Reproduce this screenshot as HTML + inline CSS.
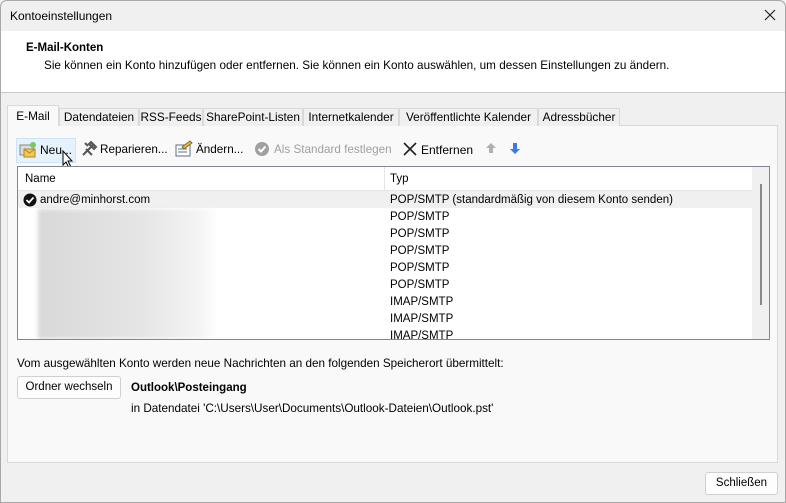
<!DOCTYPE html>
<html><head><meta charset="utf-8"><style>
*{margin:0;padding:0;box-sizing:border-box}
body{width:786px;height:503px;overflow:hidden;background:#f0f0f0;font-family:"Liberation Sans",sans-serif;font-size:12px;color:#000;position:relative}
.a{position:absolute;white-space:nowrap}
.tab{position:absolute;top:108px;height:18px;border:1px solid #d9d9d9;border-bottom:none;background:#f0f0f0;text-align:center;line-height:17px;font-size:11.8px;white-space:nowrap}
.l{font-size:11.5px}
</style></head><body>
<div class="a" style="left:0;top:0;width:786px;height:503px;border:1px solid #a8a8a8;border-radius:7px 7px 0 0"></div>
<div class="a" style="left:10px;top:9px;font-size:12px">Kontoeinstellungen</div>
<svg class="a" style="left:764px;top:9px" width="12" height="12"><path d="M1 1L11 11M11 1L1 11" stroke="#222" stroke-width="1.2"/></svg>
<div class="a" style="left:1px;top:31px;width:784px;height:62px;background:#fff;border-bottom:1px solid #c8c8c8"></div>
<div class="a" style="left:26px;top:42px;font-weight:bold;font-size:11.5px">E-Mail-Konten</div>
<div class="a" style="left:44px;top:59px;font-size:11.7px;letter-spacing:0.02px">Sie können ein Konto hinzufügen oder entfernen. Sie können ein Konto auswählen, um dessen Einstellungen zu ändern.</div>

<div class="a" style="left:7px;top:125px;width:771px;height:338px;border:1px solid #d9d9d9;background:#f9f9f9"></div>
<div class="tab" style="left:7px;top:105px;height:21px;width:52px;background:#f9f9f9;line-height:21px">E-Mail</div>
<div class="tab" style="left:59px;width:80px">Datendateien</div>
<div class="tab" style="left:139px;width:64px">RSS-Feeds</div>
<div class="tab" style="left:203px;width:100px">SharePoint-Listen</div>
<div class="tab" style="left:303px;width:96px">Internetkalender</div>
<div class="tab" style="left:399px;width:139px">Veröffentlichte Kalender</div>
<div class="tab" style="left:538px;width:82px">Adressbücher</div>

<div class="a" style="left:16px;top:138px;width:60px;height:25px;background:#e5f1fb;border:1px solid #cce4f7"></div>
<svg class="a" style="left:19px;top:141px" width="18" height="18"><rect x="1" y="4" width="13" height="10" fill="#ddd" stroke="#888"/><rect x="5" y="8" width="11" height="8" fill="#f2c94c" stroke="#a88a2a"/><path d="M5 8l5.5 4L16 8" fill="none" stroke="#a88a2a"/><circle cx="14" cy="4" r="3" fill="#7cc36b"/></svg>
<div class="a" style="left:40px;top:143px">Neu...</div>
<svg class="a" style="left:62px;top:150px" width="12" height="19"><path d="M1 1v14l3-3 3 6 2-1-3-6h4z" fill="#fff" stroke="#000"/></svg>
<svg class="a" style="left:80px;top:140px" width="18" height="18"><path d="M3 15L13 5M5 3l3 3M12 15L6 9M11 2l5 5-2 2-5-5z" stroke="#555" stroke-width="2" fill="#999"/></svg>
<div class="a" style="left:100px;top:143px;font-size:11.7px">Reparieren...</div>
<svg class="a" style="left:175px;top:140px" width="18" height="18"><rect x="1" y="5" width="14" height="11" fill="#fff" stroke="#5a6e8a"/><path d="M3 9h9M3 12h9" stroke="#5a6e8a"/><path d="M7 7l8-6 2 2-8 6z" fill="#e6b84a" stroke="#8a6a1a"/></svg>
<div class="a" style="left:196px;top:143px;font-size:11.7px">Ändern...</div>
<svg class="a" style="left:254px;top:141px" width="16" height="16"><circle cx="8" cy="8" r="7" fill="#a0a0a0"/><path d="M4.5 8l2.5 2.5 4.5-5" stroke="#fff" stroke-width="2" fill="none"/></svg>
<div class="a" style="left:274px;top:143px;color:#a0a0a0;font-size:11.7px">Als Standard festlegen</div>
<svg class="a" style="left:403px;top:142px" width="14" height="14"><path d="M1 1l12 12M13 1L1 13" stroke="#222" stroke-width="1.6"/></svg>
<div class="a" style="left:421px;top:143px">Entfernen</div>
<svg class="a" style="left:486px;top:143px" width="10" height="11"><path d="M5 0l5 5H7v5H3V5H0z" fill="#b0b0b0"/></svg>
<svg class="a" style="left:510px;top:143px" width="10" height="11"><path d="M5 11l5-5H7V0H3v6H0z" fill="#3c7be0"/></svg>

<div class="a l" style="left:17px;top:166px;width:753px;height:174px;border:1px solid #82878f;background:#fff;overflow:hidden">
 <div class="a" style="left:0;top:0;width:734px;height:24px;border-bottom:1px solid #e5e5e5"></div>
 <div class="a" style="left:366px;top:0;width:1px;height:24px;background:#e5e5e5"></div>
 <div class="a" style="left:7px;top:6px">Name</div>
 <div class="a" style="left:372px;top:6px">Typ</div>
 <div class="a" style="left:0;top:24px;width:734px;height:17px;background:#f0f0f0"></div>
 <svg class="a" style="left:5px;top:26px" width="14" height="14"><circle cx="7" cy="7" r="6.5" fill="#111"/><path d="M3.5 7l2.5 2.5 4.5-5" stroke="#fff" stroke-width="1.8" fill="none"/></svg>
 <div class="a" style="left:22px;top:27px">andre@minhorst.com</div>
 <div class="a" style="left:20px;top:42px;width:180px;height:130px;background:linear-gradient(90deg,#d8d8d8,#e6e6e6 60%,#f4f4f4 90%,#fff);filter:blur(2px)"></div>
 <div class="a" style="left:372px;top:27px">POP/SMTP (standardmäßig von diesem Konto senden)</div>
 <div class="a" style="left:372px;top:44px">POP/SMTP</div>
 <div class="a" style="left:372px;top:61px">POP/SMTP</div>
 <div class="a" style="left:372px;top:78px">POP/SMTP</div>
 <div class="a" style="left:372px;top:95px">POP/SMTP</div>
 <div class="a" style="left:372px;top:112px">POP/SMTP</div>
 <div class="a" style="left:372px;top:129px">IMAP/SMTP</div>
 <div class="a" style="left:372px;top:146px">IMAP/SMTP</div>
 <div class="a" style="left:372px;top:163px">IMAP/SMTP</div>
 <div class="a" style="left:734px;top:0;width:18px;height:174px;background:#f0f0f0"></div>
 <div class="a" style="left:742px;top:17px;width:2px;height:121px;background:#888"></div>
</div>

<div class="a" style="left:17px;top:357px;font-size:11.7px">Vom ausgewählten Konto werden neue Nachrichten an den folgenden Speicherort übermittelt:</div>
<div class="a" style="left:17px;top:376px;width:104px;height:23px;border:1px solid #d0d0d0;border-radius:3px;background:#fdfdfd;text-align:center;line-height:21px;font-size:11.5px">Ordner wechseln</div>
<div class="a" style="left:131px;top:382px;font-weight:bold;font-size:11.5px">Outlook\Posteingang</div>
<div class="a" style="left:131px;top:402px;font-size:11.7px">in Datendatei 'C:\Users\User\Documents\Outlook-Dateien\Outlook.pst'</div>

<div class="a" style="left:705px;top:472px;width:73px;height:23px;border:1px solid #d0d0d0;border-radius:3px;background:#fdfdfd;text-align:center;line-height:21px;font-size:11.5px">Schließen</div>
</body></html>
